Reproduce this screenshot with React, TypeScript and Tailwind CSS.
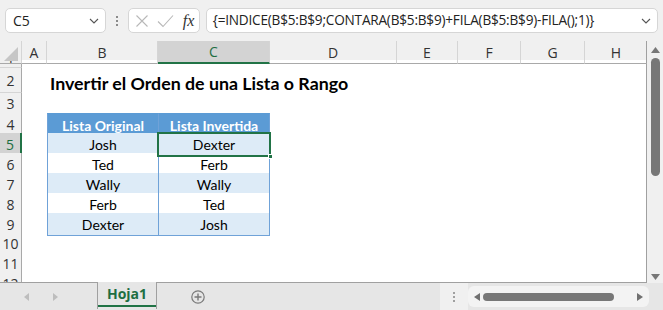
import React from "react";

const COLS = "grid-cols-[22px_25px_111px_112px_127px_61px_63px_64px_62px]";
const letters = ["A", "B", "C", "D", "E", "F", "G", "H"];
const uiFont = "font-['Open_Sans','Noto_Sans',sans-serif]";
const cellFont = "font-['Lato','Liberation_Sans',sans-serif]";

type Row = { n: number; h: string; b?: string; c?: string; kind?: "head" | "band" | "plain" | "title" };

const rows: Row[] = [
  { n: 2, h: "h-[25px]", kind: "title" },
  { n: 3, h: "h-[20px]" },
  { n: 4, h: "h-[20px]", b: "Lista Original", c: "Lista Invertida", kind: "head" },
  { n: 5, h: "h-[20px]", b: "Josh", c: "Dexter", kind: "band" },
  { n: 6, h: "h-[20px]", b: "Ted", c: "Ferb", kind: "plain" },
  { n: 7, h: "h-[20px]", b: "Wally", c: "Wally", kind: "band" },
  { n: 8, h: "h-[20px]", b: "Ferb", c: "Ted", kind: "plain" },
  { n: 9, h: "h-[20px]", b: "Dexter", c: "Josh", kind: "band" },
  { n: 10, h: "h-[20px]" },
  { n: 11, h: "h-[20px]" },
];

function RowHeader({ n, active }: { n: number; active?: boolean }) {
  return (
    <div
      className={`flex items-center justify-center border-b border-[#d5d5d5] text-[14px] ${uiFont} ${
        active
          ? "bg-[#d3d3d3] text-[#1e6e42] border-r-2 border-r-[#217346]"
          : "bg-[#f0f0f0] text-[#333] border-r border-r-[#a9a9a9]"
      }`}
    >
      {n}
    </div>
  );
}

function TableCell({ text, kind, col }: { text: string; kind: Row["kind"]; col: "b" | "c" }) {
  const bg =
    kind === "head" ? "bg-[#5b9bd5] text-white font-bold" : kind === "band" ? "bg-[#ddebf7] text-black" : "bg-white text-black";
  const borders = `border-b border-l border-[#6fa2d8] ${col === "c" ? "border-r" : ""} ${kind === "head" ? "border-t border-t-[#5b9bd5]" : ""}`;
  return (
    <div className={`flex items-center justify-center text-[14px] pt-[1px] ${cellFont} ${bg} ${borders}`}>{text}</div>
  );
}

export default function App() {
  return (
    <div className="w-[663px] h-[310px] overflow-hidden bg-[#f0f0f0] flex flex-col select-none">
      {/* Formula bar */}
      <div className={`h-[41px] flex items-center px-[5px] gap-0 ${uiFont}`}>
        <div className="w-[101px] h-[25px] bg-white border border-[#d6d6d6] rounded-[5px] flex items-center justify-between pl-[7px] pr-[6px] text-[14px] text-[#222]">
          <span>C5</span>
          <svg width="10" height="6" viewBox="0 0 10 6">
            <path d="M1 1l4 4 4-4" stroke="#555" strokeWidth="1.1" fill="none" />
          </svg>
        </div>
        <div className="w-[22px] flex flex-col items-center gap-[2px]">
          <div className="w-[2px] h-[2px] bg-[#8a8a8a]" />
          <div className="w-[2px] h-[2px] bg-[#8a8a8a]" />
          <div className="w-[2px] h-[2px] bg-[#8a8a8a]" />
        </div>
        <div className="w-[72px] h-[25px] bg-white border border-[#d6d6d6] rounded-[5px] flex items-center pl-[5px] pr-[4px]">
          <svg width="14" height="14" viewBox="0 0 14 14" className="ml-[1px]">
            <path d="M1.5 1.5l11 11M12.5 1.5l-11 11" stroke="#b8b8b8" strokeWidth="1.1" fill="none" />
          </svg>
          <svg width="17" height="14" viewBox="0 0 17 14" className="ml-[8px]">
            <path d="M1 7.5l5 5L16 1.5" stroke="#b8b8b8" strokeWidth="1.1" fill="none" />
          </svg>
          <span className="ml-[9px] text-[16px] italic font-['Liberation_Serif',serif] text-[#333] leading-none">fx</span>
        </div>
        <div className="ml-[6px] w-[453px] h-[25px] bg-white border border-[#d6d6d6] rounded-[5px] flex items-center justify-between pl-[6px] pr-[6px] text-[13.6px] text-[#222]">
          <span className="tracking-[-0.2px]">{"{=INDICE(B$5:B$9;CONTARA(B$5:B$9)+FILA(B$5:B$9)-FILA();1)}"}</span>
          <svg width="10" height="6" viewBox="0 0 10 6">
            <path d="M1 1l4 4 4-4" stroke="#555" strokeWidth="1.1" fill="none" />
          </svg>
        </div>
      </div>

      {/* Sheet + vertical scrollbar */}
      <div className="flex h-[242px]">
        <div className="w-[647px] flex flex-col bg-white border-r border-[#a0a0a0] border-b border-b-[#a0a0a0]">
          {/* column header */}
          <div className={`grid ${COLS} h-[19px] bg-[#f0f0f0] ${uiFont}`}>
            <div className="relative border-r border-[#d5d5d5] border-b border-b-[#a9a9a9]">
              <svg width="14" height="14" viewBox="0 0 14 14" className="absolute right-[3px] bottom-[2px]">
                <path d="M14 0L14 14L0 14Z" fill="#c6c6c6" />
              </svg>
            </div>
            {letters.map((l) => (
              <div
                key={l}
                className={`flex items-center justify-center text-[14px] border-r border-[#d5d5d5] ${
                  l === "C"
                    ? "bg-[#d3d3d3] text-[#1e6e42] border-b-2 border-b-[#217346]"
                    : "text-[#333] border-b border-b-[#a9a9a9]"
                } ${l === "H" ? "border-r-0" : ""}`}
              >
                {l}
              </div>
            ))}
          </div>

          {/* row 1 partial */}
          <div className={`grid ${COLS} h-[8px] overflow-hidden`}>
            <div className={`h-[8px] overflow-hidden bg-[#f0f0f0] border-r border-[#a9a9a9] border-b border-b-[#d5d5d5] text-[14px] text-[#333] ${uiFont}`}>
              <div className="h-[20px] -mt-[12px] flex items-center justify-center">1</div>
            </div>
          </div>

          {rows.map((r) => (
            <div key={r.n} className={`grid ${COLS} ${r.h}`}>
              <RowHeader n={r.n} active={r.n === 5} />
              <div />
              {r.kind === "title" ? (
                <div className="relative">
                  <span className={`absolute left-[3px] top-[2px] whitespace-nowrap text-[17.8px] font-bold text-black ${cellFont}`}>
                    Invertir el Orden de una Lista o Rango
                  </span>
                </div>
              ) : r.b ? (
                <TableCell text={r.b} kind={r.kind} col="b" />
              ) : (
                <div />
              )}
              {r.c ? (
                r.n === 5 ? (
                  <div className="relative">
                    <TableCellWrap text={r.c} />
                    <div className="absolute -left-[1px] -top-[1px] right-[-1px] bottom-[-1px] border-2 border-[#217346] pointer-events-none" />
                    <div className="absolute right-[-3px] bottom-[-3px] w-[5px] h-[5px] bg-[#217346] border border-white" />
                  </div>
                ) : (
                  <TableCell text={r.c} kind={r.kind} col="c" />
                )
              ) : (
                <div />
              )}
            </div>
          ))}

          {/* row 12 partial */}
          <div className={`grid ${COLS} h-[9px] overflow-hidden`}>
            <div className={`h-[9px] overflow-hidden bg-[#f0f0f0] border-r border-[#a9a9a9] text-[14px] text-[#333] ${uiFont}`}>
              <div className="h-[20px] flex items-center justify-center">12</div>
            </div>
          </div>
        </div>

        {/* vertical scrollbar */}
        <div className="w-[16px] flex flex-col items-center bg-[#f0f0f0] pt-[4px] pb-[3px]">
          <svg width="9" height="6" viewBox="0 0 9 6" className="mt-[2px]">
            <path d="M0 6L4.5 0L9 6Z" fill="#777" />
          </svg>
          <div className="mt-[5px] w-[9px] h-[118px] rounded-full bg-[#777]" />
          <div className="flex-1" />
          <svg width="9" height="6" viewBox="0 0 9 6">
            <path d="M0 0L9 0L4.5 6Z" fill="#777" />
          </svg>
        </div>
      </div>

      {/* Sheet tabs */}
      <div className={`h-[27px] flex bg-[#e6e6e6] ${uiFont}`}>
        <div className="w-[97px] flex items-center">
          <svg width="5" height="8" viewBox="0 0 5 8" className="ml-[24px]">
            <path d="M5 0L0 4L5 8Z" fill="#bdbdbd" />
          </svg>
          <svg width="5" height="8" viewBox="0 0 5 8" className="ml-[24px]">
            <path d="M0 0L5 4L0 8Z" fill="#bdbdbd" />
          </svg>
        </div>
        <div className="w-[60px] h-[27px] -mt-[1px] bg-[#e6e6e6] border-l border-r border-[#a0a0a0] flex flex-col">
          <div className="flex-1 flex items-center justify-center text-[14px] font-bold text-[#1e6e42]">Hoja1</div>
          <div className="h-[2px] bg-[#217346] mb-[2px]" />
        </div>
        <div className="w-[283px] flex items-center">
          <svg width="14" height="14" viewBox="0 0 14 14" className="ml-[34px]">
            <circle cx="7" cy="7" r="6.2" stroke="#7a7a7a" strokeWidth="1.2" fill="none" />
            <path d="M7 3.5v7M3.5 7h7" stroke="#7a7a7a" strokeWidth="1.4" />
          </svg>
        </div>
        <div className="w-[28px] bg-[#f0f0f0] flex flex-col items-center justify-center gap-[2px]">
          <div className="w-[2px] h-[2px] bg-[#a0a0a0]" />
          <div className="w-[2px] h-[2px] bg-[#a0a0a0]" />
          <div className="w-[2px] h-[2px] bg-[#a0a0a0]" />
        </div>
        <div className="w-[181px] my-[3px] bg-[#f3f3f3] rounded-[6px] flex items-center px-[6px]">
          <svg width="6" height="8" viewBox="0 0 6 8">
            <path d="M6 0L0 4L6 8Z" fill="#707070" />
          </svg>
          <div className="ml-[3px] w-[131px] h-[8px] rounded-full bg-[#777]" />
          <div className="flex-1" />
          <svg width="6" height="8" viewBox="0 0 6 8">
            <path d="M0 0L6 4L0 8Z" fill="#707070" />
          </svg>
        </div>
        <div className="flex-1" />
      </div>
    </div>
  );
}

function TableCellWrap({ text }: { text: string }) {
  return (
    <div className={`h-full flex items-center justify-center text-[14px] pt-[1px] ${cellFont} bg-[#ddebf7] text-black border-b border-l border-r border-[#6fa2d8]`}>
      {text}
    </div>
  );
}
